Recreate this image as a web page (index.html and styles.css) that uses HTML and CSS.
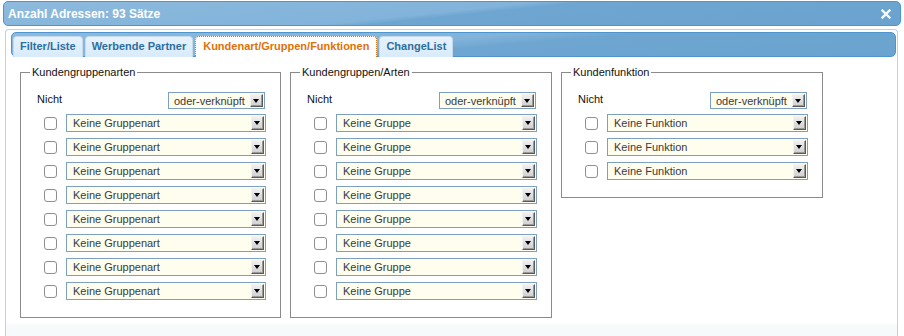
FILE: index.html
```html
<!DOCTYPE html>
<html lang="de">
<head>
    <meta charset="UTF-8">
    <title>Anzahl Adressen</title>
    <link rel="stylesheet" href="styles.css">
</head>
<body>
    <div class="dialog">
        <div class="titlebar">
            <span class="title">Anzahl Adressen: 93 Sätze</span>
            <svg class="close" width="10" height="10" viewBox="0 0 10 10">
                <path d="M1.5 1.5 L8.5 8.5 M8.5 1.5 L1.5 8.5" stroke="#f4f8fb" stroke-width="2.4" stroke-linecap="square"></path>
            </svg>
        </div>

        <div class="panel">
            <ul class="tabs">
                <li class="tab">Filter/Liste</li>
                <li class="tab">Werbende Partner</li>
                <li class="tab active">Kundenart/Gruppen/Funktionen</li>
                <li class="tab">ChangeList</li>
            </ul>

            <div class="content">
                <fieldset class="group">
                    <legend>Kundengruppenarten</legend>
                    <div class="head">
                        <span>Nicht</span>
                        <div class="select small"><span>oder-verknüpft</span><i class="arrow"></i></div>
                    </div>
                    <div class="row"><span class="check"></span><div class="select"><span>Keine Gruppenart</span><i class="arrow"></i></div></div>
                    <div class="row"><span class="check"></span><div class="select"><span>Keine Gruppenart</span><i class="arrow"></i></div></div>
                    <div class="row"><span class="check"></span><div class="select"><span>Keine Gruppenart</span><i class="arrow"></i></div></div>
                    <div class="row"><span class="check"></span><div class="select"><span>Keine Gruppenart</span><i class="arrow"></i></div></div>
                    <div class="row"><span class="check"></span><div class="select"><span>Keine Gruppenart</span><i class="arrow"></i></div></div>
                    <div class="row"><span class="check"></span><div class="select"><span>Keine Gruppenart</span><i class="arrow"></i></div></div>
                    <div class="row"><span class="check"></span><div class="select"><span>Keine Gruppenart</span><i class="arrow"></i></div></div>
                    <div class="row"><span class="check"></span><div class="select"><span>Keine Gruppenart</span><i class="arrow"></i></div></div>
                </fieldset>

                <fieldset class="group">
                    <legend>Kundengruppen/Arten</legend>
                    <div class="head">
                        <span>Nicht</span>
                        <div class="select small"><span>oder-verknüpft</span><i class="arrow"></i></div>
                    </div>
                    <div class="row"><span class="check"></span><div class="select"><span>Keine Gruppe</span><i class="arrow"></i></div></div>
                    <div class="row"><span class="check"></span><div class="select"><span>Keine Gruppe</span><i class="arrow"></i></div></div>
                    <div class="row"><span class="check"></span><div class="select"><span>Keine Gruppe</span><i class="arrow"></i></div></div>
                    <div class="row"><span class="check"></span><div class="select"><span>Keine Gruppe</span><i class="arrow"></i></div></div>
                    <div class="row"><span class="check"></span><div class="select"><span>Keine Gruppe</span><i class="arrow"></i></div></div>
                    <div class="row"><span class="check"></span><div class="select"><span>Keine Gruppe</span><i class="arrow"></i></div></div>
                    <div class="row"><span class="check"></span><div class="select"><span>Keine Gruppe</span><i class="arrow"></i></div></div>
                    <div class="row"><span class="check"></span><div class="select"><span>Keine Gruppe</span><i class="arrow"></i></div></div>
                </fieldset>

                <fieldset class="group">
                    <legend>Kundenfunktion</legend>
                    <div class="head">
                        <span>Nicht</span>
                        <div class="select small"><span>oder-verknüpft</span><i class="arrow"></i></div>
                    </div>
                    <div class="row"><span class="check"></span><div class="select"><span>Keine Funktion</span><i class="arrow"></i></div></div>
                    <div class="row"><span class="check"></span><div class="select"><span>Keine Funktion</span><i class="arrow"></i></div></div>
                    <div class="row"><span class="check"></span><div class="select"><span>Keine Funktion</span><i class="arrow"></i></div></div>
                </fieldset>
            </div>
        </div>
    </div>
</body>
</html>
```

FILE: styles.css
```css
/* Basic Reset */
* {
    margin: 0;
    padding: 0;
    box-sizing: border-box;
}

body {
    font-family: "Liberation Sans", Arial, sans-serif;
    font-size: 11px;
    background-color: #fff;
    width: 904px;
    height: 336px;
    overflow: hidden;
}

.dialog {
    padding: 1px 3px 0 3px;
}

/* Title bar */
.titlebar {
    height: 25px;
    border: 1px solid #4f95cd;
    border-radius: 5px;
    background: linear-gradient(174deg, #8dbadd 0%, #82b3da 48%, #6ea6d1 52%, #6aa3cf 100%);
    display: flex;
    align-items: center;
    justify-content: space-between;
    padding: 0 9px 0 4px;
}

.title {
    color: #fff;
    font-size: 12px;
    font-weight: bold;
}

.close {
    display: block;
    margin-top: 1px;
}

/* Panel with tabs */
.panel {
    margin: 3px 3px 0 2px;
    height: 307px;
    border: 1px solid #b9d4ea;
    border-bottom: none;
    border-radius: 4px 4px 0 0;
    padding: 2px 1px 0 5px;
    background: linear-gradient(#fff 0, #fff 292px, #f6fafa 296px);
}

.tabs {
    list-style: none;
    display: flex;
    gap: 2px;
    height: 25px;
    padding: 3px 0 0 1px;
    border: 1px solid #4f95cd;
    border-radius: 5px;
    background: linear-gradient(175deg, #8dbadd 0%, #82b3da 45%, #6ea6d1 55%, #6aa3cf 100%);
}

.tab {
    height: 21px;
    padding: 0 6px;
    line-height: 19px;
    font-weight: bold;
    color: #2e6e9e;
    background: linear-gradient(#e6f2fc, #d8ebfb);
    border: 1px solid #c5dbec;
    border-bottom: none;
    border-radius: 4px 4px 0 0;
}

.tab.active {
    padding: 0 7px;
    color: #e17009;
    background: #fff;
    border: 1px dotted #e17009;
    border-bottom: none;
}

/* Fieldsets */
.content {
    display: flex;
    align-items: flex-start;
    gap: 9px;
    padding: 9px 0 0 9px;
}

.group {
    width: 262px;
    border: 1px solid #8a8a8a;
    padding: 14px 14px 17px 16px;
}

.group:first-child {
    width: 261px;
}

.group legend {
    margin-left: -7px;
    padding: 0 2px;
    color: #111;
    font-size: 11px;
}

.head {
    display: flex;
    justify-content: space-between;
    align-items: flex-start;
    height: 20px;
    margin-bottom: 2px;
    color: #111;
}

.head > span {
    line-height: 14px;
}

.row {
    display: flex;
    align-items: center;
    height: 18px;
    margin-bottom: 6px;
}

.row:last-child {
    margin-bottom: 0;
}

.check {
    width: 13px;
    height: 13px;
    margin-left: 7px;
    margin-right: 9px;
    border: 1px solid #8f8f8f;
    border-radius: 3px;
    background: #fff;
}

/* Fake drop-downs */
.select {
    flex: 1;
    height: 18px;
    display: flex;
    align-items: center;
    justify-content: space-between;
    padding: 0 1px 0 6px;
    border: 1px solid #7d9fc0;
    background: #fefdee;
    color: #3a3a3a;
}

.select.small {
    flex: none;
    width: 97px;
    height: 17px;
    margin-right: 1px;
    padding-left: 5px;
}

.arrow {
    position: relative;
    width: 13px;
    height: 14px;
    border: 1px solid;
    border-color: #f2f2f2 #5a5a5a #5a5a5a #f2f2f2;
    background: linear-gradient(#f0f0f0, #cfcfcf);
    box-shadow: inset -1px -1px 0 #9a9a9a;
}

.select.small .arrow {
    height: 13px;
}

.arrow::after {
    content: "";
    position: absolute;
    left: 2px;
    top: 4px;
    border-left: 3.5px solid transparent;
    border-right: 3.5px solid transparent;
    border-top: 4px solid #000;
}
```
